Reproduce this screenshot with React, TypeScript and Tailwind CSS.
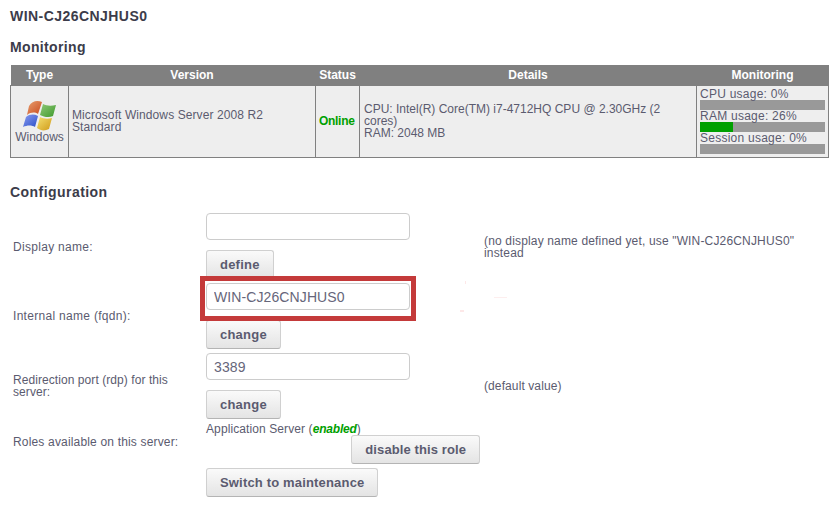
const cellText = "text-[12px] leading-[12px] text-[#5b5b6f]";

const WindowsLogo = () => (
  <svg width="34" height="31" viewBox="0 0 34 31" className="block">
    <defs>
      <linearGradient id="red" x1="0" y1="0" x2="1" y2="1">
        <stop offset="0" stopColor="#e8a070" />
        <stop offset="1" stopColor="#c8481c" />
      </linearGradient>
      <linearGradient id="green" x1="0" y1="0" x2="1" y2="1">
        <stop offset="0" stopColor="#8fc878" />
        <stop offset="1" stopColor="#3f9a2c" />
      </linearGradient>
      <linearGradient id="blue" x1="0" y1="0" x2="1" y2="1">
        <stop offset="0" stopColor="#8a9cf0" />
        <stop offset="1" stopColor="#2c50c8" />
      </linearGradient>
      <linearGradient id="yellow" x1="0" y1="0" x2="1" y2="1">
        <stop offset="0" stopColor="#f4e070" />
        <stop offset="1" stopColor="#d09a18" />
      </linearGradient>
    </defs>
    <path d="M6 6 C9 1 14 0 19 2 L15 14 C12 12 8 12 4 15 Z" fill="url(#red)" />
    <path d="M20 4 C24 6 28 6 33 5 L30 16 C26 18 21 17 17 15 Z" fill="url(#green)" />
    <path d="M3 17 C7 14 11 14 15 16 L12 27 C9 25 4 25 0 27 Z" fill="url(#blue)" />
    <path d="M17 17 C21 19 25 19 29 18 L26 29 C22 31 18 31 14 28 Z" fill="url(#yellow)" />
  </svg>
);

const Usage = ({ label, percent }: { label: string; percent: number }) => (
  <div>
    <div className="h-[12px] text-[12px] leading-[12px] tracking-[0.25px]">{label}</div>
    <div className="h-[10px] bg-[#999999]">
      <div className="h-full bg-[#00a000]" style={{ width: `${percent}%` }} />
    </div>
  </div>
);

const Btn = ({ children, className = "tracking-[0.22px]" }: { children: string; className?: string }) => (
  <button
    className={`h-[29px] rounded-[3px] border border-[#d0d0d0] border-b-[#b4b4b4] bg-gradient-to-b from-[#fafafa] to-[#e4e4e4] px-[13px] pt-[2px] text-[13px] font-bold text-[#5b5b6f] ${className}`}
  >
    {children}
  </button>
);

const Input = ({ value = "" }: { value?: string }) => (
  <input
    readOnly
    value={value}
    className="block h-[27px] w-[204px] rounded-[4px] border border-[#cccccc] bg-white px-[7px] pt-[2px] text-[14px] tracking-[0.1px] text-[#66667a] outline-none"
  />
);

const Th = ({ children, className = "" }: { children: string; className?: string }) => (
  <th className={`h-[20px] p-0 text-center text-[12px] font-bold text-white ${className}`}>{children}</th>
);

export default function App() {
  return (
    <div className="relative h-[509px] w-[839px] overflow-hidden bg-white font-['Liberation_Sans',Arial,sans-serif]">
      <div className="pl-[10px] pt-[8px]">
        <h1 className="h-[16px] text-[14px] leading-[16px] font-bold tracking-[0.45px] text-[#3c3c4a]">WIN-CJ26CNJHUS0</h1>
        <h2 className="mt-[15px] h-[16px] text-[14px] leading-[16px] font-bold tracking-[0.35px] text-[#3c3c4a]">Monitoring</h2>

        <table className="mt-[10px] w-[818px] table-fixed border-collapse">
          <colgroup>
            <col className="w-[58px]" />
            <col className="w-[247px]" />
            <col className="w-[44px]" />
            <col className="w-[337px]" />
            <col className="w-[132px]" />
          </colgroup>
          <thead className="bg-[#808080]">
            <tr>
              <Th>Type</Th>
              <Th>Version</Th>
              <Th>Status</Th>
              <Th>Details</Th>
              <Th>Monitoring</Th>
            </tr>
          </thead>
          <tbody>
            <tr className={`h-[72px] bg-[#eeeeee] ${cellText}`}>
              <td className="border border-[#808080] p-0 pt-[14px] text-center align-top">
                <div className="flex flex-col items-center">
                  <WindowsLogo />
                  <span>Windows</span>
                </div>
              </td>
              <td className="border border-[#808080] px-[3px] py-0 tracking-[0.09px]">Microsoft Windows Server 2008 R2 Standard</td>
              <td className="border border-[#808080] px-[3px] py-0 font-bold tracking-[-0.3px] text-[#00a000]">Online</td>
              <td className="border border-[#808080] px-[4px] py-0">
                CPU: Intel(R) Core(TM) i7-4712HQ CPU @ 2.30GHz (2 cores)
                <br />
                RAM: 2048 MB
              </td>
              <td className="border border-[#808080] px-[3px] pb-0 pt-[2px] align-top">
                <Usage label="CPU usage: 0%" percent={0} />
                <Usage label="RAM usage: 26%" percent={26} />
                <Usage label="Session usage: 0%" percent={0} />
              </td>
            </tr>
          </tbody>
        </table>

        <h2 className="mt-[26px] h-[16px] text-[14px] leading-[16px] font-bold tracking-[0.45px] text-[#3c3c4a]">Configuration</h2>

        <div className={`mt-[13px] grid grid-cols-[196px_278px_1fr] ${cellText}`}>
          <div className="flex h-[70px] items-center pb-[2px] pl-[3px] tracking-[0.3px]">Display name:</div>
          <div>
            <Input />
            <Btn className="mt-[10px] tracking-[0.22px]">define</Btn>
          </div>
          <div className="flex h-[70px] w-[330px] items-center pb-[2px] tracking-[0.16px]">
            (no display name defined yet, use "WIN-CJ26CNJHUS0" instead
          </div>

          <div className="flex h-[70px] items-center pb-[4px] pl-[3px] tracking-[0.3px]">Internal name (fqdn):</div>
          <div>
            <Input value="WIN-CJ26CNJHUS0" />
            <Btn className="mt-[10px] tracking-[0.22px]">change</Btn>
          </div>
          <div />

          <div className="flex h-[70px] w-[170px] items-center pb-[3px] pl-[3px] tracking-[0.07px]">Redirection port (rdp) for this server:</div>
          <div>
            <Input value="3389" />
            <Btn className="mt-[10px] tracking-[0.22px]">change</Btn>
          </div>
          <div className="flex h-[66px] items-center tracking-[0.1px]">(default value)</div>

          <div className="flex h-[42px] items-center pb-[3px] pl-[3px] tracking-[0.17px]">Roles available on this server:</div>
          <div className="w-[274px]">
            <div className="h-[12px] whitespace-nowrap tracking-[0.1px]">
              Application Server (<span className="font-bold italic tracking-[-0.2px] text-[#00a000]">enabled</span>)
            </div>
            <div className="flex justify-end">
              <Btn className="tracking-[0.1px]">disable this role</Btn>
            </div>
          </div>
          <div />

          <div />
          <div className="pt-[3px]">
            <Btn className="tracking-[0.17px]">Switch to maintenance</Btn>
          </div>
          <div />
        </div>
      </div>

      {/* highlight added over the screenshot */}
      <div className="absolute left-[200px] top-[276px] h-[45px] w-[216px] border-[5px] border-[#c43a3a]" />
      <div className="absolute left-[465px] top-[281px] h-[3px] w-px bg-[#fde8e8]" />
      <div className="absolute left-[494px] top-[297px] h-px w-[13px] bg-[#fdeeee]" />
      <div className="absolute left-[460px] top-[310px] h-[2px] w-[4px] bg-[#fde8e8]" />
    </div>
  );
}
